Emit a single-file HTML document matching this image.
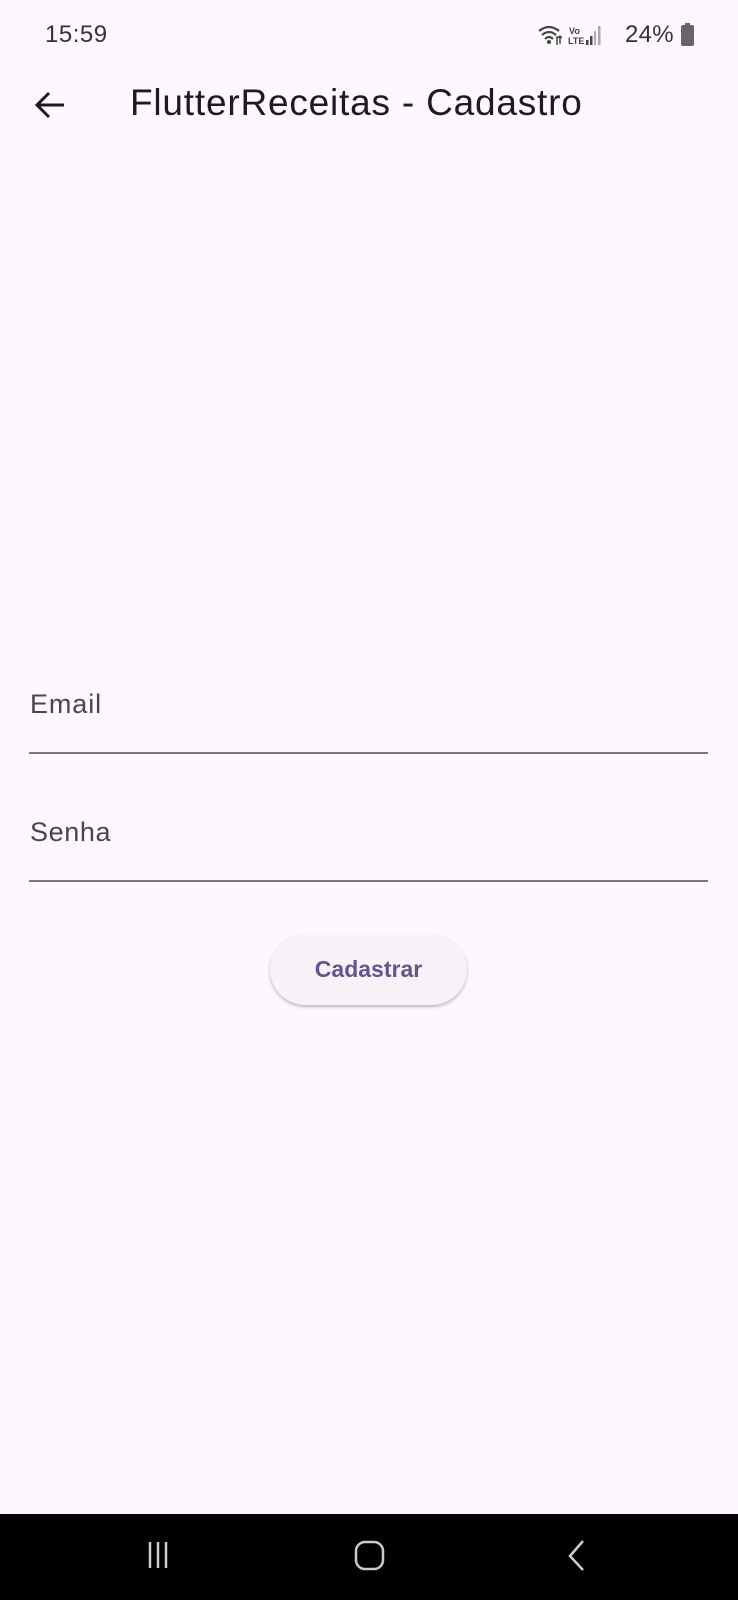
<!DOCTYPE html>
<html><head><meta charset="utf-8"><style>
html,body{margin:0;padding:0}
body{width:738px;height:1600px;background:#fdf8fd;position:relative;overflow:hidden;font-family:"Liberation Sans",sans-serif}
.a{position:absolute}
</style></head><body>
<div class="a" style="left:45px;top:21px;font-size:24px;color:#333;letter-spacing:0.5px">15:59</div>
<svg class="a" style="left:537px;top:22px" width="60" height="26" viewBox="0 0 60 26">
<path d="M2 9 Q12 1 22 9 M5 13 Q12 7 19 13 M8 17 Q12 13 16 17" stroke="#444" stroke-width="2.2" fill="none"/>
<circle cx="12" cy="20" r="2" fill="#444"/>
<path d="M20 14v9M23 22v-8m-2 2l2-2 2 2" stroke="#444" stroke-width="1.5" fill="none"/>
<text x="32" y="12" font-size="9" font-family="Liberation Sans" fill="#444" font-weight="bold">Vo</text>
<text x="31" y="22" font-size="9" font-family="Liberation Sans" fill="#444" font-weight="bold">LTE</text>
<rect x="49" y="18" width="2.5" height="5" fill="#444"/><rect x="53" y="14" width="2.5" height="9" fill="#444"/>
<rect x="57" y="9" width="2" height="14" fill="#aaa"/>
</svg>
<svg class="a" style="left:596px;top:22px" width="8" height="26"><rect x="2" y="4" width="2.5" height="19" fill="#aaa"/></svg>
<div class="a" style="left:625px;top:21px;font-size:24px;color:#333;letter-spacing:0.3px">24%</div>
<div class="a" style="left:681px;top:25px;width:13px;height:21px;background:#666;border-radius:2px"></div>
<div class="a" style="left:685px;top:23px;width:5px;height:3px;background:#666"></div>
<svg class="a" style="left:34px;top:90px" width="32" height="30" viewBox="0 0 32 30">
<path d="M30 15H4M15 3L3 15l12 12" stroke="#1d1b20" stroke-width="3" fill="none"/>
</svg>
<div class="a" style="left:130px;top:82px;font-size:37px;color:#1d1b20;letter-spacing:0.8px">FlutterReceitas - Cadastro</div>
<div class="a" style="left:30px;top:689px;font-size:27px;color:#49454f;letter-spacing:0.9px">Email</div>
<div class="a" style="left:29px;top:752px;width:679px;height:2px;background:#79747e"></div>
<div class="a" style="left:30px;top:817px;font-size:27px;color:#49454f;letter-spacing:0.6px">Senha</div>
<div class="a" style="left:29px;top:880px;width:679px;height:2px;background:#79747e"></div>
<div class="a" style="left:270px;top:934px;width:197px;height:71px;border-radius:36px;background:#f6f2f8;box-shadow:0 2px 3px rgba(0,0,0,0.25);text-align:center;line-height:71px;font-size:23px;color:#65558f;font-weight:bold">Cadastrar</div>
<div class="a" style="left:0;top:1514px;width:738px;height:86px;background:#000"></div>
<svg class="a" style="left:140px;top:1535px" width="460" height="40">
<path d="M10 7v26M18 7v26M26 7v26" stroke="#ccc" stroke-width="2.5"/>
<rect x="216" y="7" width="27" height="27" rx="9" stroke="#ccc" stroke-width="2.5" fill="none"/>
<path d="M443 6L430 21l13 14" stroke="#ccc" stroke-width="2.5" fill="none"/>
</svg>
</body></html>
